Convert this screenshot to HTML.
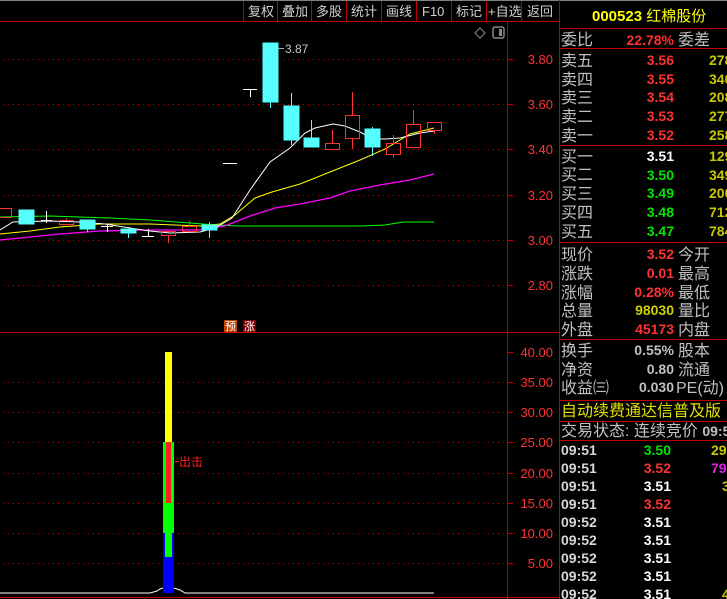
<!DOCTYPE html>
<html><head><meta charset="utf-8"><style>
html,body{margin:0;padding:0;background:#000;width:727px;height:599px;overflow:hidden}
svg text{font-family:"Liberation Sans","Noto Sans CJK SC",sans-serif}
</style></head><body>
<svg width="727" height="599" xmlns="http://www.w3.org/2000/svg">
<rect width="727" height="599" fill="#000"/>
<line x1="0" y1="0.5" x2="727" y2="0.5" stroke="#808080"/>
<!-- toolbar -->
<g stroke="#c00000" stroke-width="1">
<line x1="0" y1="21.5" x2="559" y2="21.5"/>
<line x1="243.5" y1="1" x2="243.5" y2="21"/><line x1="277.5" y1="1" x2="277.5" y2="21"/>
<line x1="311.5" y1="1" x2="311.5" y2="21"/><line x1="346.5" y1="1" x2="346.5" y2="21"/>
<line x1="381.5" y1="1" x2="381.5" y2="21"/><line x1="416.5" y1="1" x2="416.5" y2="21"/>
<line x1="451.5" y1="1" x2="451.5" y2="21"/><line x1="486.5" y1="1" x2="486.5" y2="21"/>
<line x1="521.5" y1="1" x2="521.5" y2="21"/>
<line x1="507.5" y1="21" x2="507.5" y2="599"/>
<line x1="559.5" y1="0" x2="559.5" y2="599"/>
<line x1="0" y1="332.5" x2="559" y2="332.5"/>
<line x1="0" y1="597.5" x2="559" y2="597.5"/>
</g>
<g fill="#d0d0d0" font-size="13">
<text x="248" y="16">复权</text><text x="282" y="16">叠加</text><text x="316" y="16">多股</text>
<text x="351" y="16">统计</text><text x="386" y="16">画线</text><text x="422" y="16">F10</text>
<text x="456" y="16">标记</text><text x="488" y="16">+自选</text><text x="527" y="16">返回</text>
</g>
<!-- icons -->
<path d="M480 28 L485 33 L480 38 L475 33 Z" fill="none" stroke="#888"/>
<rect x="493" y="27" width="11" height="11" rx="2" fill="none" stroke="#888" stroke-width="1.5"/>
<rect x="499" y="29" width="3" height="7" fill="#888"/>
<!-- price grid -->
<g stroke="#c00000" stroke-dasharray="1,4">
<line x1="3" y1="59.5" x2="505" y2="59.5"/><line x1="3" y1="104.5" x2="505" y2="104.5"/>
<line x1="3" y1="149.5" x2="505" y2="149.5"/><line x1="3" y1="195.5" x2="505" y2="195.5"/>
<line x1="3" y1="240.5" x2="505" y2="240.5"/><line x1="3" y1="285.5" x2="505" y2="285.5"/>
<line x1="3" y1="382.5" x2="505" y2="382.5"/><line x1="3" y1="412.5" x2="505" y2="412.5"/>
<line x1="3" y1="442.5" x2="505" y2="442.5"/><line x1="3" y1="473.5" x2="505" y2="473.5"/>
<line x1="3" y1="503.5" x2="505" y2="503.5"/><line x1="3" y1="533.5" x2="505" y2="533.5"/>
<line x1="3" y1="563.5" x2="505" y2="563.5"/>
</g>
<g stroke="#c00000">
<line x1="507" y1="59.5" x2="513" y2="59.5"/><line x1="507" y1="104.5" x2="513" y2="104.5"/>
<line x1="507" y1="149.5" x2="513" y2="149.5"/><line x1="507" y1="195.5" x2="513" y2="195.5"/>
<line x1="507" y1="240.5" x2="513" y2="240.5"/><line x1="507" y1="285.5" x2="513" y2="285.5"/>
<line x1="507" y1="352.5" x2="513" y2="352.5"/><line x1="507" y1="382.5" x2="513" y2="382.5"/>
<line x1="507" y1="412.5" x2="513" y2="412.5"/><line x1="507" y1="442.5" x2="513" y2="442.5"/>
<line x1="507" y1="473.5" x2="513" y2="473.5"/><line x1="507" y1="503.5" x2="513" y2="503.5"/>
<line x1="507" y1="533.5" x2="513" y2="533.5"/><line x1="507" y1="563.5" x2="513" y2="563.5"/>
</g>
<g fill="#ff3232" font-size="13" text-anchor="end">
<text x="553" y="64">3.80</text><text x="553" y="109">3.60</text><text x="553" y="154">3.40</text>
<text x="553" y="200">3.20</text><text x="553" y="245">3.00</text><text x="553" y="290">2.80</text>
<text x="553" y="357">40.00</text><text x="553" y="387">35.00</text><text x="553" y="417">30.00</text>
<text x="553" y="447">25.00</text><text x="553" y="478">20.00</text><text x="553" y="508">15.00</text>
<text x="553" y="538">10.00</text><text x="553" y="568">5.00</text>
</g>
<!-- MA lines -->
<polyline fill="none" stroke="#00ff00" points="0,217 50,216 80,217 110,218 150,220 190,223 215,225 240,226 280,226 320,226 360,226 385,225 403,222 434,222"/>
<polyline fill="none" stroke="#ff00ff" stroke-width="1.3" points="0,240 30,237 60,234 100,231 150,230 200,230 225,226 250,216 275,208 300,204 330,198 350,191 380,185 410,180 434,174"/>
<polyline fill="none" stroke="#ffff00" points="0,234 30,231 60,227 100,224 150,224 200,226 220,224 235,215 255,198 272,192 300,184 335,170 360,160 385,149 410,134 434,128"/>
<polyline fill="none" stroke="#ffffff" points="0,230 13,222 50,221 80,222 105,224 130,228 150,231 170,233 200,232 215,228 222,224 232,218 250,190 270,162 290,148 305,133 315,128 333,124 345,126 360,132 373,139 385,139 400,138 420,133 434,131"/>
<!-- candles -->
<g fill="none" stroke="#ff3232">
<rect x="-2.5" y="208.5" width="14" height="9"/>
<rect x="59.5" y="220.5" width="14" height="4"/><line x1="66.5" y1="218" x2="66.5" y2="220"/>
<rect x="161.5" y="231.5" width="14" height="4"/><line x1="168.5" y1="236" x2="168.5" y2="243"/>
<rect x="182.5" y="226.5" width="14" height="5"/><line x1="189.5" y1="221" x2="189.5" y2="226"/>
<rect x="325.5" y="143.5" width="14" height="6"/><line x1="332.5" y1="130" x2="332.5" y2="143"/>
<rect x="345.5" y="115.5" width="14" height="23"/><line x1="352.5" y1="92" x2="352.5" y2="115"/><line x1="352.5" y1="139" x2="352.5" y2="149"/>
<rect x="386.5" y="143.5" width="14" height="11"/><line x1="393.5" y1="135" x2="393.5" y2="143"/><line x1="393.5" y1="155" x2="393.5" y2="158"/>
<rect x="406.5" y="124.5" width="14" height="23"/><line x1="413.5" y1="110" x2="413.5" y2="124"/>
<rect x="427.5" y="122.5" width="14" height="8"/><line x1="434.5" y1="131" x2="434.5" y2="134"/>
</g>
<g fill="#55ffff" stroke="#55ffff">
<rect x="19" y="210" width="15" height="14"/>
<rect x="80" y="220" width="15" height="9"/><line x1="87.5" y1="229" x2="87.5" y2="232"/>
<rect x="121" y="229" width="15" height="4"/><line x1="128.5" y1="233" x2="128.5" y2="238"/>
<rect x="202" y="225" width="15" height="5"/><line x1="209.5" y1="222" x2="209.5" y2="238"/>
<rect x="263" y="43" width="15" height="59"/><line x1="270.5" y1="102" x2="270.5" y2="108"/>
<rect x="284" y="106" width="15" height="34"/><line x1="291.5" y1="93" x2="291.5" y2="145"/>
<rect x="304" y="138" width="15" height="9"/><line x1="311.5" y1="120" x2="311.5" y2="138"/>
<rect x="365" y="129" width="15" height="18"/><line x1="372.5" y1="127" x2="372.5" y2="156"/>
</g>
<g stroke="#fff">
<line x1="46.5" y1="211" x2="46.5" y2="223"/><line x1="41" y1="220.5" x2="52" y2="220.5"/>
<line x1="107.5" y1="224" x2="107.5" y2="232"/><line x1="101" y1="226.5" x2="113" y2="226.5"/>
<line x1="148.5" y1="229" x2="148.5" y2="237"/><line x1="142" y1="236.5" x2="154" y2="236.5"/>
<line x1="223" y1="163.5" x2="237" y2="163.5"/>
<line x1="243" y1="89.5" x2="257" y2="89.5"/><line x1="250.5" y1="89" x2="250.5" y2="97"/>
<line x1="278" y1="48.5" x2="284" y2="48.5" stroke="#aaa"/>
</g>
<text x="285" y="53" fill="#c8c8c8" font-size="12">3.87</text>
<!-- 预涨 -->
<rect x="224" y="320" width="13" height="12" fill="#c04000"/>
<rect x="243" y="320" width="13" height="12" fill="#800000"/>
<text x="225" y="330" fill="#fff" font-size="11">预</text>
<text x="244" y="330" fill="#fff" font-size="11">涨</text>
<!-- volume bar -->
<polyline fill="none" stroke="#fff" points="0,593 150,593 157,591 160,589 163,588 174,588 180,590 185,593 434,593"/>
<rect x="163" y="533" width="11" height="60" fill="#0000ff"/>
<rect x="163" y="442" width="11" height="91" fill="#00ff00"/>
<rect x="165" y="533" width="7" height="24" fill="#00ff00"/>
<rect x="165" y="352" width="7" height="90" fill="#ffff00"/>
<rect x="166" y="442" width="5" height="61" fill="#ff2020"/>
<line x1="175" y1="461.5" x2="179" y2="461.5" stroke="#ff2020"/>
<text x="179" y="466" fill="#ff2020" font-size="12">出击</text>
<!-- right panel -->
<g stroke="#c00000">
<line x1="559" y1="28.5" x2="727" y2="28.5"/>
<line x1="559" y1="48.5" x2="727" y2="48.5"/>
<line x1="559" y1="145.5" x2="727" y2="145.5"/>
<line x1="559" y1="242.5" x2="727" y2="242.5"/>
<line x1="559" y1="339.5" x2="727" y2="339.5"/>
<line x1="559" y1="400.5" x2="727" y2="400.5"/>
<line x1="559" y1="421.5" x2="727" y2="421.5"/>
<line x1="559" y1="440.5" x2="727" y2="440.5"/>
</g>
<text x="592" y="21" fill="#ffff00" font-size="15" font-weight="bold">000523 <tspan font-weight="normal">红棉股份</tspan></text>
<g font-size="16" fill="#c0c0c0">
<text x="561" y="45">委比</text><text x="678" y="45">委差</text>
<text x="561" y="66">卖五</text><text x="561" y="85">卖四</text><text x="561" y="103">卖三</text><text x="561" y="122">卖二</text><text x="561" y="141">卖一</text>
<text x="561" y="162">买一</text><text x="561" y="180">买二</text><text x="561" y="199">买三</text><text x="561" y="218">买四</text><text x="561" y="237">买五</text>
<text x="561" y="260">现价</text><text x="678" y="260">今开</text>
<text x="561" y="279">涨跌</text><text x="678" y="279">最高</text>
<text x="561" y="298">涨幅</text><text x="678" y="298">最低</text>
<text x="561" y="316">总量</text><text x="678" y="316">量比</text>
<text x="561" y="335">外盘</text><text x="678" y="335">内盘</text>
<text x="561" y="356">换手</text><text x="678" y="356">股本</text>
<text x="561" y="375">净资</text><text x="678" y="375">流通</text>
<text x="561" y="393">收益㈢</text><text x="676" y="393">PE(动)</text>
<text x="561" y="436">交易状态: 连续竞价 <tspan font-weight="bold" font-size="14">09:5</tspan></text>
</g>
<text x="561" y="416" fill="#e0e000" font-size="16">自动续费通达信普及版</text>
<g font-size="14" font-weight="bold" text-anchor="end">
<text x="674" y="45" fill="#ff3232">22.78%</text>
<text x="674" y="65" fill="#ff3232">3.56</text><text x="674" y="84" fill="#ff3232">3.55</text>
<text x="674" y="102" fill="#ff3232">3.54</text><text x="674" y="121" fill="#ff3232">3.53</text>
<text x="674" y="140" fill="#ff3232">3.52</text>
<text x="674" y="161" fill="#fff">3.51</text>
<text x="674" y="180" fill="#00e600">3.50</text><text x="674" y="198" fill="#00e600">3.49</text>
<text x="674" y="217" fill="#00e600">3.48</text><text x="674" y="236" fill="#00e600">3.47</text>
<text x="674" y="259" fill="#ff3232">3.52</text><text x="674" y="278" fill="#ff3232">0.01</text>
<text x="674" y="297" fill="#ff3232">0.28%</text>
<text x="674" y="315" fill="#d0d000">98030</text><text x="674" y="334" fill="#ff3232">45173</text>
<text x="674" y="355" fill="#c0c0c0">0.55%</text><text x="674" y="374" fill="#c0c0c0">0.80</text>
<text x="674" y="392" fill="#c0c0c0">0.030</text>
</g>
<g font-size="14" font-weight="bold" fill="#c8c800">
<text x="709" y="65">278</text><text x="709" y="84">340</text><text x="709" y="102">208</text>
<text x="709" y="121">277</text><text x="709" y="140">258</text><text x="709" y="161">129</text>
<text x="709" y="180">349</text><text x="709" y="198">200</text><text x="709" y="217">712</text>
<text x="709" y="236">784</text>
<text x="711" y="455">29</text><text x="711" y="473" fill="#e020e0">79</text>
<text x="722" y="491">3</text><text x="722" y="599">4</text>
</g>
<g font-size="14" font-weight="bold">
<g fill="#d8d8d8">
<text x="561" y="455">09:51</text><text x="561" y="473">09:51</text><text x="561" y="491">09:51</text>
<text x="561" y="509">09:51</text><text x="561" y="527">09:52</text><text x="561" y="545">09:52</text>
<text x="561" y="563">09:52</text><text x="561" y="581">09:52</text><text x="561" y="599">09:52</text>
</g>
<g text-anchor="end">
<text x="671" y="455" fill="#00e600">3.50</text><text x="671" y="473" fill="#ff3232">3.52</text>
<text x="671" y="491" fill="#fff">3.51</text><text x="671" y="509" fill="#ff3232">3.52</text>
<text x="671" y="527" fill="#fff">3.51</text><text x="671" y="545" fill="#fff">3.51</text>
<text x="671" y="563" fill="#fff">3.51</text><text x="671" y="581" fill="#fff">3.51</text>
<text x="671" y="599" fill="#fff">3.51</text>
</g>
</g>
</svg>
</body></html>
